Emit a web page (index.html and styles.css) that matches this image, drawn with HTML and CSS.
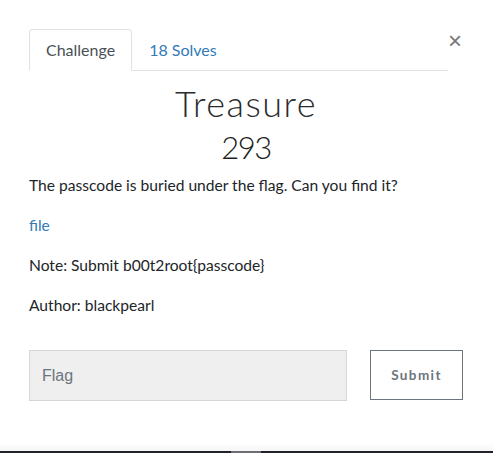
FILE: index.html
```html
<!DOCTYPE html>
<html>
<head>
<meta charset="utf-8">
<link rel="stylesheet" href="styles.css">
</head>
<body>
<div class="modal">
  <button class="close" aria-label="Close">&times;</button>
  <ul class="tabs">
    <li class="tab active">Challenge</li>
    <li class="tab"><a href="#">18 Solves</a></li>
  </ul>
  <h2 class="title">Treasure</h2>
  <h3 class="points">293</h3>
  <div class="desc">
    <p>The passcode is buried under the flag. Can you find it?</p>
    <p><a href="#">file</a></p>
    <p>Note: Submit b00t2root{passcode}</p>
    <p>Author: blackpearl</p>
  </div>
  <form class="submit-row">
    <input class="flag" type="text" placeholder="Flag">
    <button class="btn" type="button">Submit</button>
  </form>
</div>
<div class="bottom"><div class="thumb"></div></div>
</body>
</html>
```
FILE: styles.css
```css
html, body {
  margin: 0;
  padding: 0;
  background: #fff;
}
body {
  width: 493px;
  height: 453px;
  position: relative;
  overflow: hidden;
  font-family: Lato, "Noto Sans", sans-serif;
  color: #212529;
}
.modal {
  padding: 29px 30px 0 29px;
  position: relative;
}
.close {
  position: absolute;
  right: 31px;
  top: 30px;
  border: 0;
  background: none;
  font-family: "Liberation Sans", sans-serif;
  font-size: 24px;
  line-height: 22px;
  color: #777;
  padding: 0;
  cursor: pointer;
}
.tabs {
  list-style: none;
  margin: 0 15px 0 0;
  padding: 0;
  display: flex;
  border-bottom: 1px solid #dee2e6;
}
.tab {
  padding: 8px 16px;
  font-size: 16px;
  line-height: 24px;
  margin-bottom: -1px;
  border: 1px solid transparent;
  border-radius: 4px 4px 0 0;
}
.tab.active {
  border-color: #dee2e6 #dee2e6 #fff;
  color: #495057;
}
.tab a {
  color: #337ab7;
  text-decoration: none;
}
.title {
  margin: 11px 0 0;
  text-align: center;
  font-weight: 300;
  font-size: 36px;
  line-height: 43px;
  letter-spacing: 1.5px;
  color: #292b2c;
}
.points {
  margin: 5px 0 0;
  text-align: center;
  font-weight: 300;
  font-size: 31px;
  line-height: 35px;
  letter-spacing: -1.5px;
  color: #1d1f21;
}
.desc {
  margin-top: 8px;
  font-size: 15.6px;
  line-height: 24px;
}
.desc p {
  margin: 0 0 16px;
}
.desc a {
  color: #337ab7;
  text-decoration: none;
}
.submit-row {
  display: flex;
  gap: 23px;
  margin: 33px 0 0;
  align-items: flex-start;
}
.flag {
  box-sizing: border-box;
  width: 318px;
  height: 51px;
  border: 1px solid #d4d6da;
  background: #efefef;
  padding: 0 12px;
  font-family: "Liberation Sans", Arial, sans-serif;
  font-size: 16px;
  color: #495057;
  outline: none;
  border-radius: 0;
}
.flag::placeholder {
  color: #6c757d;
}
.btn {
  box-sizing: border-box;
  width: 93px;
  height: 50px;
  border: 1px solid #6c757d;
  background: #fff;
  color: #6c757d;
  font-family: Lato, sans-serif;
  font-weight: 700;
  font-size: 13.5px;
  letter-spacing: 1.4px;
  border-radius: 0;
  padding: 0;
}
.bottom {
  position: absolute;
  left: 0;
  right: 0;
  bottom: 0;
  height: 2px;
  background: #1f2226;
}
.bottom::before {
  content: "";
  position: absolute;
  left: 0;
  right: 0;
  bottom: 2px;
  height: 8px;
  background: linear-gradient(to bottom, rgba(0,0,0,0), rgba(0,0,0,0.04));
}
.thumb {
  position: absolute;
  left: 231px;
  width: 30px;
  top: 0;
  height: 2px;
  background: #6b6d70;
}
```
